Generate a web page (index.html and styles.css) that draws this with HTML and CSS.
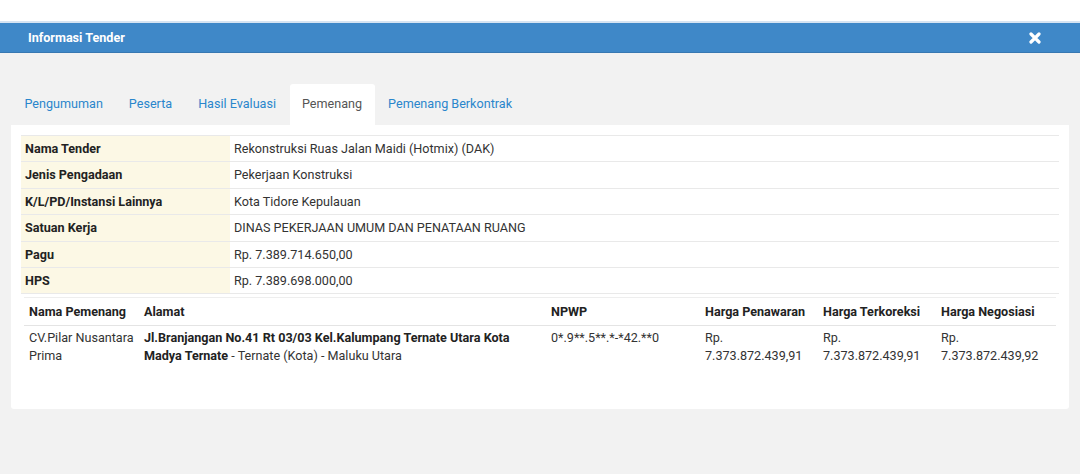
FILE: index.html
```html
<!DOCTYPE html>
<html lang="id">
<head>
    <meta charset="UTF-8">
    <title>Informasi Tender</title>
    <link rel="stylesheet" href="styles.css">
</head>
<body>
    <div class="top-space"></div>
    <div class="modal">
        <div class="modal-header">
            <span class="modal-title">Informasi Tender</span>
            <span class="close">
                <svg width="12" height="12" viewBox="0 0 12 12">
                    <path d="M2 2 L10 10 M10 2 L2 10" stroke="#fff" stroke-width="3.2" stroke-linecap="round"/>
                </svg>
            </span>
        </div>
        <div class="modal-body">
            <ul class="tabs">
                <li><a href="#">Pengumuman</a></li>
                <li><a href="#">Peserta</a></li>
                <li><a href="#">Hasil Evaluasi</a></li>
                <li class="active"><a href="#">Pemenang</a></li>
                <li><a href="#">Pemenang Berkontrak</a></li>
            </ul>
            <div class="panel">
                <table class="info">
                    <tr><th>Nama Tender</th><td>Rekonstruksi Ruas Jalan Maidi (Hotmix) (DAK)</td></tr>
                    <tr><th>Jenis Pengadaan</th><td>Pekerjaan Konstruksi</td></tr>
                    <tr><th>K/L/PD/Instansi Lainnya</th><td>Kota Tidore Kepulauan</td></tr>
                    <tr><th>Satuan Kerja</th><td>DINAS PEKERJAAN UMUM DAN PENATAAN RUANG</td></tr>
                    <tr><th>Pagu</th><td>Rp. 7.389.714.650,00</td></tr>
                    <tr><th>HPS</th><td>Rp. 7.389.698.000,00</td></tr>
                </table>
                <div class="winner-wrap">
                    <table class="winner">
                        <thead>
                            <tr>
                                <th class="c-nama">Nama Pemenang</th>
                                <th class="c-alamat">Alamat</th>
                                <th class="c-npwp">NPWP</th>
                                <th class="c-harga">Harga Penawaran</th>
                                <th class="c-harga">Harga Terkoreksi</th>
                                <th>Harga Negosiasi</th>
                            </tr>
                        </thead>
                        <tbody>
                            <tr>
                                <td>CV.Pilar Nusantara Prima</td>
                                <td><b>Jl.Branjangan No.41 Rt 03/03 Kel.Kalumpang Ternate Utara Kota Madya Ternate</b> - Ternate (Kota) - Maluku Utara</td>
                                <td>0*.9**.5**.*-*42.**0</td>
                                <td>Rp. 7.373.872.439,91</td>
                                <td>Rp. 7.373.872.439,91</td>
                                <td>Rp. 7.373.872.439,92</td>
                            </tr>
                        </tbody>
                    </table>
                </div>
            </div>
        </div>
    </div>
</body>
</html>
```

FILE: styles.css
```css
body {
    margin: 0;
    font-family: Roboto, "Noto Sans", sans-serif;
    font-size: 12.6px;
    color: #333;
    background-color: #f2f2f2;
}
.top-space {
    height: 21px;
    background-color: #fff;
    border-bottom: 2px solid #d6e4f2;
}
.modal-header {
    height: 29px;
    background-color: #3f88c8;
    border-bottom: 1px solid #3878b2;
    display: flex;
    align-items: center;
    justify-content: space-between;
    padding: 0 39px 0 28px;
}
.modal-title {
    color: #fff;
    font-weight: bold;
    font-size: 12.6px;
}
.close {
    display: flex;
}
.modal-body {
    padding: 31px 11px 0 11px;
}
.tabs {
    list-style: none;
    margin: 0 0 0 1px;
    padding: 0;
    display: flex;
}
.tabs li {
    margin-right: 1px;
}
.tabs a {
    display: block;
    padding: 11px 12.5px 12px 12.5px;
    line-height: 18px;
    color: #2a86cc;
    text-decoration: none;
}
.tabs li.active a {
    background-color: #fff;
    color: #555;
    border-radius: 3px 3px 0 0;
}
.panel {
    background-color: #fff;
    padding: 10px 10px 40px 10px;
    border-radius: 0 0 3px 3px;
}
table {
    border-collapse: collapse;
    width: 100%;
}
.info th,
.info td {
    text-align: left;
    padding: 4px 4px;
    line-height: 17.4px;
    border-top: 1px solid #e9e9e9;
}
.info tr:last-child th,
.info tr:last-child td {
    border-bottom: 1px solid #e9e9e9;
}
.info th {
    width: 201px;
    background-color: #fcf8e5;
    color: #222;
}
.info td {
    color: #333;
}
.winner-wrap {
    padding: 3px 3px 0 3px;
}
.winner th,
.winner td {
    text-align: left;
    vertical-align: top;
    padding: 4px 5px;
    line-height: 18px;
}
.winner th {
    color: #222;
    border-top: 1px solid #eee;
    border-bottom: 1px solid #e4e4e4;
    padding-top: 5px;
    padding-bottom: 4px;
}
.winner td {
    padding-top: 3px;
}
.winner td b {
    color: #222;
}
.c-nama {
    width: 105px;
}
.c-alamat {
    width: 397px;
}
.c-npwp {
    width: 144px;
}
.c-harga {
    width: 108px;
}
```
